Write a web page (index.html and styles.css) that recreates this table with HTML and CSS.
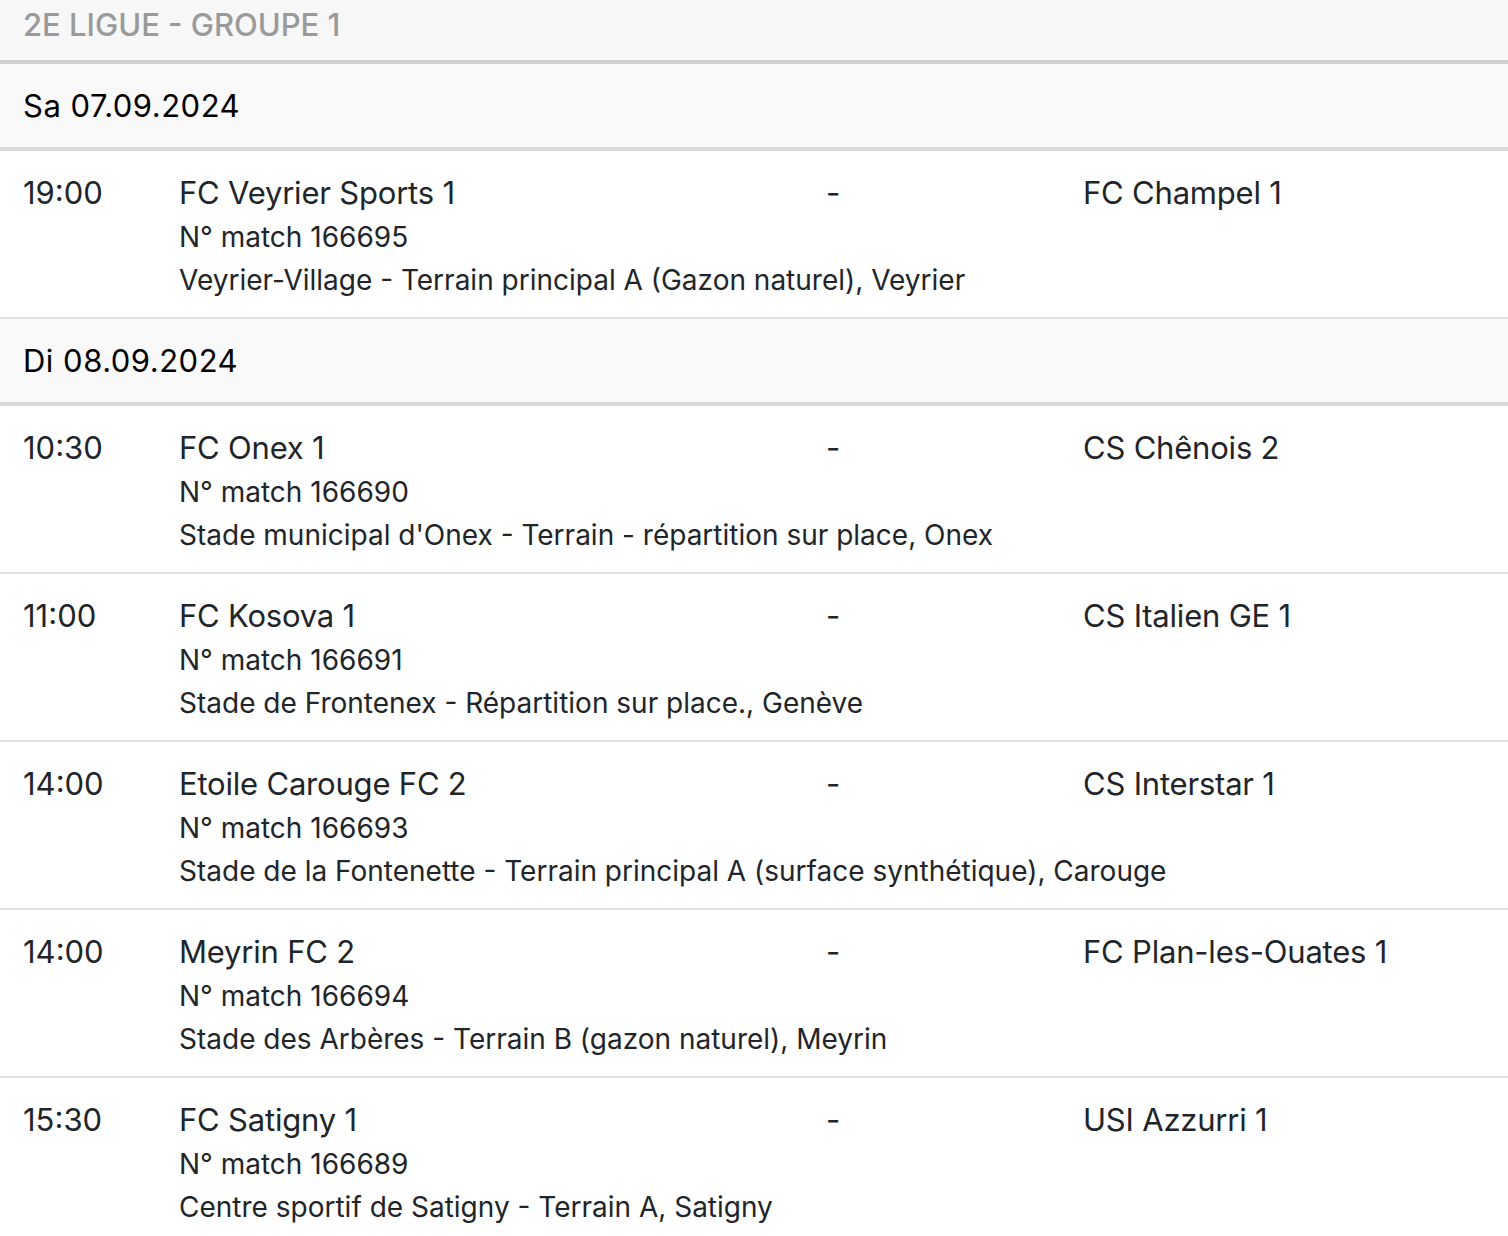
FILE: index.html
```html
<!DOCTYPE html>
<html lang="fr">
<head>
<meta charset="utf-8">
<title>2e ligue - Groupe 1</title>
<link rel="stylesheet" href="styles.css">
</head>
<body>
<div class="schedule">
  <div class="league">2E LIGUE - GROUPE 1</div>

  <div class="day">Sa 07.09.2024</div>
  <div class="match">
    <div class="time">19:00</div>
    <div class="home">FC Veyrier Sports 1</div>
    <div class="score">-</div>
    <div class="away">FC Champel 1</div>
    <div class="info">N° match 166695</div>
    <div class="info">Veyrier-Village - Terrain principal A (Gazon naturel), Veyrier</div>
  </div>

  <div class="day">Di 08.09.2024</div>
  <div class="match">
    <div class="time">10:30</div>
    <div class="home">FC Onex 1</div>
    <div class="score">-</div>
    <div class="away">CS Chênois 2</div>
    <div class="info">N° match 166690</div>
    <div class="info">Stade municipal d'Onex - Terrain - répartition sur place, Onex</div>
  </div>
  <div class="match">
    <div class="time">11:00</div>
    <div class="home">FC Kosova 1</div>
    <div class="score">-</div>
    <div class="away">CS Italien GE 1</div>
    <div class="info">N° match 166691</div>
    <div class="info">Stade de Frontenex - Répartition sur place., Genève</div>
  </div>
  <div class="match">
    <div class="time">14:00</div>
    <div class="home">Etoile Carouge FC 2</div>
    <div class="score">-</div>
    <div class="away">CS Interstar 1</div>
    <div class="info">N° match 166693</div>
    <div class="info">Stade de la Fontenette - Terrain principal A (surface synthétique), Carouge</div>
  </div>
  <div class="match">
    <div class="time">14:00</div>
    <div class="home">Meyrin FC 2</div>
    <div class="score">-</div>
    <div class="away">FC Plan-les-Ouates 1</div>
    <div class="info">N° match 166694</div>
    <div class="info">Stade des Arbères - Terrain B (gazon naturel), Meyrin</div>
  </div>
  <div class="match">
    <div class="time">15:30</div>
    <div class="home">FC Satigny 1</div>
    <div class="score">-</div>
    <div class="away">USI Azzurri 1</div>
    <div class="info">N° match 166689</div>
    <div class="info">Centre sportif de Satigny - Terrain A, Satigny</div>
  </div>
</div>
</body>
</html>
```

FILE: styles.css
```css
* { box-sizing: border-box; }

html, body {
  margin: 0;
  padding: 0;
  background: #ffffff;
}

body {
  font-family: Inter, "Noto Sans", "Liberation Sans", sans-serif;
  font-size: 31px;
  color: #212529;
}

.schedule {
  display: flex;
  flex-direction: column;
}

.league {
  background: #f7f7f7;
  color: #9a9a9a;
  font-weight: 500;
  line-height: 42px;
  padding: 4px 23px 14px;
  border-bottom: 4px solid #cfcfcf;
}

.day {
  background: #f9f9f9;
  color: #000000;
  line-height: 42px;
  letter-spacing: 0.5px;
  padding: 21px 23px 20px;
  border-bottom: 4px solid #d9d9d9;
}

.match {
  display: grid;
  grid-template-columns: 156px 647px 257px 1fr;
  grid-auto-rows: 43px;
  grid-template-rows: 45px;
  align-items: center;
  padding: 19px 0 16px 23px;
  border-bottom: 2px solid #e2e2e2;
}

.match:last-child {
  border-bottom: none;
}

.time {
  grid-column: 1;
}

.home {
  grid-column: 2;
  letter-spacing: -0.2px;
}

.score {
  grid-column: 3;
  padding-left: 0;
}

.away {
  grid-column: 4;
  letter-spacing: -0.2px;
}

.info {
  grid-column: 2 / 5;
  font-size: 28px;
  white-space: nowrap;
}
```
